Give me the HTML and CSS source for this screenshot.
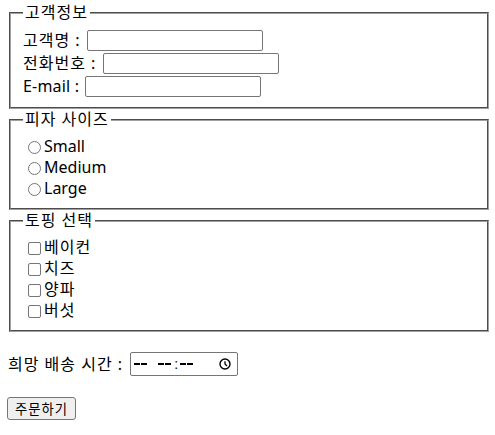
FILE: index.html
```html
<!DOCTYPE html>
<html lang="ko">
<head>
<meta charset="utf-8">
<title>피자 주문</title>
<link rel="stylesheet" href="styles.css">
</head>
<body>
<form class="order">
  <fieldset class="group">
    <legend class="legend ko">고객정보</legend>
    <div class="row"><span class="ko">고객명 : </span><input class="text" type="text"></div>
    <div class="row"><span class="ko">전화번호 : </span><input class="text" type="text"></div>
    <div class="row"><span class="lat">E-mail : </span><input class="text" type="text"></div>
  </fieldset>
  <fieldset class="group">
    <legend class="legend ko">피자 사이즈</legend>
    <label class="opt"><input class="radio" type="radio" name="size">Small</label>
    <label class="opt"><input class="radio" type="radio" name="size">Medium</label>
    <label class="opt"><input class="radio" type="radio" name="size">Large</label>
  </fieldset>
  <fieldset class="group">
    <legend class="legend ko">토핑 선택</legend>
    <label class="opt"><input class="check" type="checkbox"><span class="ko">베이컨</span></label>
    <label class="opt"><input class="check" type="checkbox"><span class="ko">치즈</span></label>
    <label class="opt"><input class="check" type="checkbox"><span class="ko">양파</span></label>
    <label class="opt"><input class="check" type="checkbox"><span class="ko">버섯</span></label>
  </fieldset>
  <p class="time-row"><span class="ko">희망 배송 시간 : </span><span class="time" role="textbox" aria-label="-- --:--"><span class="time-text"><span class="seg"></span><span class="seg"></span><span class="colon">:</span><span class="seg"></span></span><svg class="clock" width="12" height="12" viewBox="0 0 12 12"><circle cx="6" cy="6" r="5" fill="none" stroke="#000" stroke-width="1.4"/><path d="M6 3.2v2.8l2 2" fill="none" stroke="#000" stroke-width="1.3"/></svg></span></p>
  <p class="submit-row"><button class="btn ko" type="submit">주문하기</button></p>
</form>
</body>
</html>
```
FILE: styles.css
```css
html, body {
  margin: 0;
  padding: 0;
  background: #fff;
}
body {
  font-family: "Noto Sans", "Noto Sans CJK KR", sans-serif;
  font-size: 16px;
  line-height: 21px;
  color: #000;
  padding: 2px 6px 0 7px;
}
.order {
  margin: 0;
}
.ko {
  letter-spacing: 1px;
}
.group {
  margin: 0 0 0 2px;
  padding: 6px 12px 9px 12px;
  border: 2px groove #a0a0a0;
}
.legend {
  padding: 0 2px;
  line-height: 21px;
}
.row {
  display: flex;
  align-items: center;
  height: 23px;
  white-space: pre;
}
.lat {
  letter-spacing: 0.2px;
}
.text {
  flex: none;
  box-sizing: border-box;
  width: 176px;
  height: 21px;
  margin: 0 0 0 1px;
  padding: 1px 2px;
  border: 1px solid #767676;
  border-radius: 2px;
  font-size: 13.33px;
  font-family: "Noto Sans", sans-serif;
}
.opt {
  display: flex;
  align-items: center;
  height: 21px;
}
.radio, .check {
  appearance: none;
  -webkit-appearance: none;
  flex: 0 0 13px;
  box-sizing: border-box;
  width: 13px;
  height: 13px;
  margin: 1px 3px 0 5px;
  border: 1px solid #767676;
  background: #fff;
}
.radio {
  border-radius: 50%;
}
.check {
  border-radius: 2px;
}
.time-row {
  display: flex;
  align-items: center;
  height: 24px;
  white-space: pre;
  margin: 20px 0 0 1px;
}
.time {
  flex: none;
  box-sizing: border-box;
  display: inline-flex;
  align-items: center;
  justify-content: space-between;
  width: 108px;
  height: 24px;
  margin-left: 2px;
  padding: 0 6px 0 3px;
  border: 1px solid #767676;
  border-radius: 2px;
}
.time-text {
  display: flex;
  align-items: center;
  height: 14px;
}
.seg {
  display: flex;
  gap: 1px;
  width: 14px;
  height: 14px;
  align-items: center;
  margin-right: 10px;
}
.seg::before, .seg::after {
  content: "";
  display: block;
  width: 6px;
  height: 1.5px;
  background: #000;
}
.seg:nth-child(2) {
  margin-right: 2px;
}
.colon {
  font-family: "Liberation Sans", sans-serif;
  font-size: 14px;
  line-height: 14px;
  margin-right: 2px;
}
.clock {
  display: block;
}
.submit-row {
  margin: 21px 0 0 0;
}
.btn {
  box-sizing: border-box;
  height: 23px;
  padding: 0 7px;
  background: #efefef;
  border: 1px solid #767676;
  border-radius: 3px;
  font-size: 13.33px;
  font-family: "Noto Sans", "Noto Sans CJK KR", sans-serif;
  color: #000;
}
```
